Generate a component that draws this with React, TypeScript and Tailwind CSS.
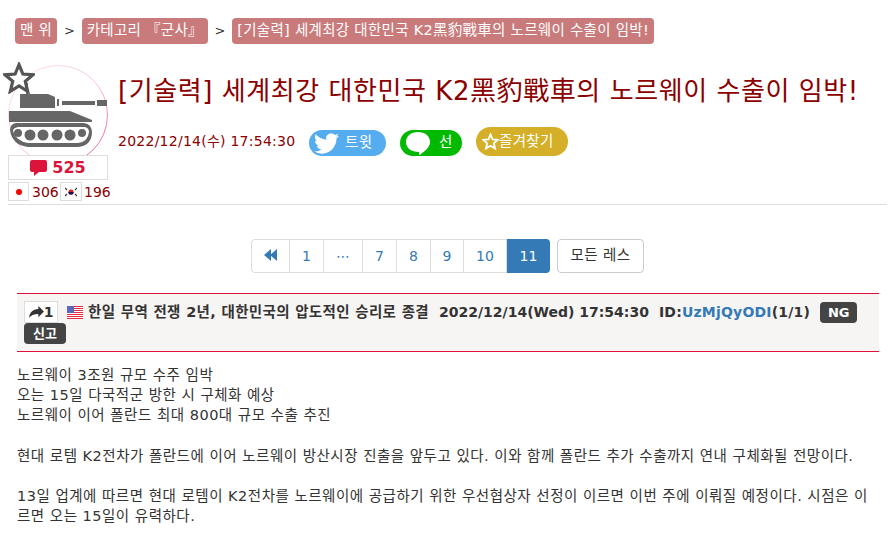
const crumbs = ['맨 위', '카테고리 『군사』', '[기술력] 세계최강 대한민국 K2黑豹戰車의 노르웨이 수출이 임박!'];
const pages = [
    { label: '1', width: 'w-[34px]' },
    { label: '⋯', width: 'w-[39px]' },
    { label: '7', width: 'w-[34px]' },
    { label: '8', width: 'w-[34px]' },
    { label: '9', width: 'w-[33px]' },
    { label: '10', width: 'w-[43px]' },
];

const TankAvatar = () => (
    <svg viewBox="0 0 100 100" className="h-[100px] w-[100px]">
        <defs>
            <linearGradient id="ring" x1="0" y1="0" x2="1" y2="1">
                <stop offset="0" stopColor="#fde4ea" />
                <stop offset="0.55" stopColor="#f9c3cf" />
                <stop offset="1" stopColor="#e4516f" />
            </linearGradient>
        </defs>
        <circle cx="50" cy="50" r="49.5" fill="#fff" stroke="url(#ring)" strokeWidth="1" />
        <g fill="#666">
            <rect x="18" y="18" width="2" height="11" />
            <path d="M12 29 H40 L47 32 V43 H12 Z" />
            <rect x="49" y="34" width="2" height="7" />
            <rect x="54" y="36" width="33" height="4" />
            <rect x="89" y="35" width="10" height="6" />
            <path d="M1 46 H62 L84 55 V57 H1 Z" />
            <path
                fillRule="evenodd"
                d="M8 58 H76 Q84 59 84 68 Q83 81 70 82 H20 Q4 80 2 65 Q2 59 8 58 Z M10 62 Q5 63 5 66 Q8 76 20 78 H70 Q80 77 81 67 Q81 63 77 62 Z"
            />
            <circle cx="10" cy="68" r="4" />
            <circle cx="22" cy="70" r="5.5" />
            <circle cx="35" cy="70" r="5.5" />
            <circle cx="49" cy="70" r="5.5" />
            <circle cx="62" cy="70" r="5.5" />
            <circle cx="74" cy="68" r="4" />
        </g>
    </svg>
);

const Star = ({ className, stroke, fill, width }: { className: string; stroke: string; fill: string; width: number }) => (
    <svg viewBox="0 0 24 24" className={className}>
        <path
            d="M12 2 L14.9 9 L22.5 9.6 L16.7 14.5 L18.5 22 L12 18 L5.5 22 L7.3 14.5 L1.5 9.6 L9.1 9 Z"
            fill={fill}
            stroke={stroke}
            strokeWidth={width}
        />
    </svg>
);

const TwitterBird = () => (
    <svg viewBox="0 0 24 24" className="h-[25px] w-[25px]" fill="#fff">
        <path d="M23.95 4.57a10 10 0 0 1-2.82.77 4.96 4.96 0 0 0 2.16-2.72 9.9 9.9 0 0 1-3.12 1.18 4.92 4.92 0 0 0-8.38 4.48C7.69 8.1 4.07 6.13 1.64 3.16a4.82 4.82 0 0 0-.67 2.48c0 1.71.87 3.21 2.19 4.1a4.9 4.9 0 0 1-2.23-.62v.06a4.92 4.92 0 0 0 3.95 4.83 5 5 0 0 1-2.21.08 4.94 4.94 0 0 0 4.6 3.42A9.87 9.87 0 0 1 0 19.54a14 14 0 0 0 7.56 2.21c9.05 0 14-7.5 14-13.98 0-.21 0-.42-.02-.63a9.94 9.94 0 0 0 2.41-2.57z" />
    </svg>
);

const UsFlag = () => (
    <svg viewBox="0 0 16 13" className="h-[13px] w-4 shrink-0">
        <rect width="16" height="13" fill="#fff" />
        {[0, 2, 4, 6, 8, 10, 12].map((y) => (
            <rect key={y} y={y} width="16" height="1" fill="#e8283f" />
        ))}
        <rect width="7" height="7" fill="#5a68c0" />
    </svg>
);

const KoreaFlag = () => (
    <svg viewBox="0 0 12 10" className="h-[10px] w-3">
        <circle cx="6" cy="5" r="2.6" fill="#d22" />
        <path d="M3.4 5 A2.6 2.6 0 0 0 8.6 5 Z" fill="#115" />
        <path d="M0 1 L2 3 M10 3 L12 1 M0 9 L2 7 M10 7 L12 9" stroke="#333" strokeWidth="1.2" />
    </svg>
);

export default function App() {
    return (
        <div className="h-[540px] w-[891px] overflow-hidden bg-white text-[14px] text-[#333]">
            <div className="font-['DejaVu_Sans','Noto_Sans_CJK_KR',sans-serif]">
                {/* breadcrumb */}
                <nav className="flex items-center pl-[15px] pt-[18px]">
                    {crumbs.map((c, i) => (
                        <div key={c} className="flex items-center">
                            {i > 0 && <span className="w-[24.5px] text-center text-[13px] text-[#333]">&gt;</span>}
                            <span className="flex h-[26px] items-center rounded-[4px] bg-[#c97b7b] px-[5px] text-[14.5px] tracking-[0.28px] whitespace-nowrap text-white">
                                {c}
                            </span>
                        </div>
                    ))}
                </nav>

                {/* thread head */}
                <header className="ml-2 mt-[21px] flex h-[140px] w-[879px] border-b border-[#ddd]">
                    <div className="relative w-[102px] shrink-0">
                        <TankAvatar />
                        <Star
                            className="absolute -left-[5px] -top-[3px] h-[32px] w-[32px]"
                            fill="#fff"
                            stroke="#555"
                            width={2.4}
                        />
                        <div className="absolute left-0 top-[90px] flex h-[25px] w-[100px] items-center justify-center gap-[5px] border border-[#ddd] bg-white text-[16px] leading-none font-bold text-[#dc143c]">
                            <svg viewBox="0 0 17 18" className="h-[18px] w-[17px]" fill="#dc143c">
                                <path d="M2 1 H15 Q17 1 17 3 V11 Q17 13 15 13 H9 L4 17 V13 H2 Q0 13 0 11 V3 Q0 1 2 1 Z" />
                            </svg>
                            525
                        </div>
                        <div className="absolute left-0 top-[117px] flex items-center text-[14px] leading-none text-[#8b0000]">
                            <span className="flex h-[19px] w-[21px] items-center justify-center border border-[#ddd]">
                                <span className="h-[6px] w-[6px] rounded-full bg-[#f00]" />
                            </span>
                            <span className="w-[31px] pl-[3px]">306</span>
                            <span className="flex h-[19px] w-[22px] items-center justify-center border border-[#ddd]">
                                <KoreaFlag />
                            </span>
                            <span className="pl-[2px]">196</span>
                        </div>
                    </div>
                    <div className="pl-2">
                        <h1 className="mt-[8px] whitespace-nowrap text-[26px] font-normal leading-[36px] tracking-[0.57px] text-[#8b0000]">
                            [기술력] 세계최강 대한민국 K2黑豹戰車의 노르웨이 수출이 임박!
                        </h1>
                        <div className="mt-[21px] flex items-center">
                            <span className="-mt-[4px] w-[191px] text-[14px] tracking-[0.25px] text-[#8b0000]">2022/12/14(수) 17:54:30</span>
                            <span className="flex h-[26px] w-[77px] items-center rounded-full bg-[#55acee] pl-[5px] text-[14.5px] text-white">
                                <TwitterBird />
                                <span className="ml-[6px] tracking-[0.5px]">트윗</span>
                            </span>
                            <span className="ml-[14px] flex h-[26px] w-[62px] items-center rounded-full bg-[#00b900] pl-[5px] text-[14.5px] text-white">
                                <svg viewBox="0 0 26 26" className="h-[26px] w-[26px]" fill="#fff">
                                    <path d="M13 2 C20 2 25 6 25 12 C25 18 18 22 15 25 C14 25 14 23 14 22 C6 22 1 18 1 12 C1 6 6 2 13 2 Z" />
                                </svg>
                                <span className="ml-[8px]">선</span>
                            </span>
                            <span className="-mt-[3px] ml-[14px] flex h-[29px] w-[92px] items-center rounded-full bg-[#d4af27] pl-[6px] text-[14.5px] tracking-[0.3px] text-white">
                                <Star className="h-[17px] w-[17px] shrink-0" fill="none" stroke="#fff" width={2.6} />
                                즐겨찾기
                            </span>
                        </div>
                    </div>
                </header>

                {/* pagination */}
                <div className="mt-[34px] flex justify-center pl-1 text-[14px]">
                    <div className="flex h-[34px] rounded-[4px] border border-[#ddd] text-[#337ab7]">
                        <span className="flex w-[38px] items-center justify-center border-r border-[#ddd]">
                            <svg viewBox="0 0 14 12" className="mb-[3px] h-3 w-[14px]" fill="#337ab7">
                                <path d="M7 0 V12 L0 6 Z M13 0 V12 L6 6 Z" />
                            </svg>
                        </span>
                        {pages.map((p) => (
                            <span key={p.label} className={`flex items-center justify-center border-r border-[#ddd] ${p.width}`}>
                                {p.label}
                            </span>
                        ))}
                        <span className="-my-px -mr-px flex w-[43px] items-center justify-center rounded-r-[4px] bg-[#337ab7] text-white">
                            11
                        </span>
                    </div>
                    <span className="ml-[7px] flex h-[34px] w-[87px] items-center justify-center rounded-[4px] border border-[#ccc] text-[14.5px] tracking-[0.4px] text-[#333]">
                        모든 레스
                    </span>
                </div>

                {/* post */}
                <section className="ml-[17px] mt-5 w-[862px]">
                    <div className="h-[59px] border-y border-[#e0103a] bg-[#f7f5f3] pl-[7px] pt-[7px] text-[14px] font-bold leading-[21px] text-[#333]">
                        <div className="flex items-center whitespace-nowrap">
                            <span className="flex h-[22px] w-[34px] items-center justify-center border border-[#ddd] bg-white">
                                <svg viewBox="0 0 16 14" className="h-[13px] w-[15px]" fill="#333">
                                    <path d="M10 0 L16 6 L10 12 V8.5 C5 8.5 2 10 0 13 C0.5 7 4 3.5 10 3.2 Z" />
                                </svg>
                                1
                            </span>
                            <span className="ml-[9px]"><UsFlag /></span>
                            <span className="ml-[5px] text-[14.5px] tracking-[0.33px]">한일 무역 전쟁 2년, 대한민국의 압도적인 승리로 종결</span>
                            <span className="ml-[10px]">2022/12/14(Wed) 17:54:30</span>
                            <span className="ml-[10px] tracking-[0.2px]">ID:<span className="text-[#337ab7]">UzMjQyODI</span>(1/1)</span>
                            <span className="ml-[10px] flex h-[21px] w-[37px] items-center justify-center rounded-[4px] bg-[#444] text-[13px] text-white">NG</span>
                        </div>
                        <span className="flex h-[21px] w-[42px] items-center justify-center rounded-[4px] bg-[#444] text-[13px] text-white">신고</span>
                    </div>
                    <div className="break-all pr-1 pt-[13px] text-[14.5px] leading-[20.2px] tracking-[0.5px] text-[#333]">
                        <p>노르웨이 3조원 규모 수주 임박</p>
                        <p>오는 15일 다국적군 방한 시 구체화 예상</p>
                        <p>노르웨이 이어 폴란드 최대 800대 규모 수출 추진</p>
                        <p className="mt-[20.2px]">현대 로템 K2전차가 폴란드에 이어 노르웨이 방산시장 진출을 앞두고 있다. 이와 함께 폴란드 추가 수출까지 연내 구체화될 전망이다.</p>
                        <p className="mt-[20.2px]">13일 업계에 따르면 현대 로템이 K2전차를 노르웨이에 공급하기 위한 우선협상자 선정이 이르면 이번 주에 이뤄질 예정이다. 시점은 이르면 오는 15일이 유력하다.</p>
                    </div>
                </section>
            </div>
        </div>
    );
}
